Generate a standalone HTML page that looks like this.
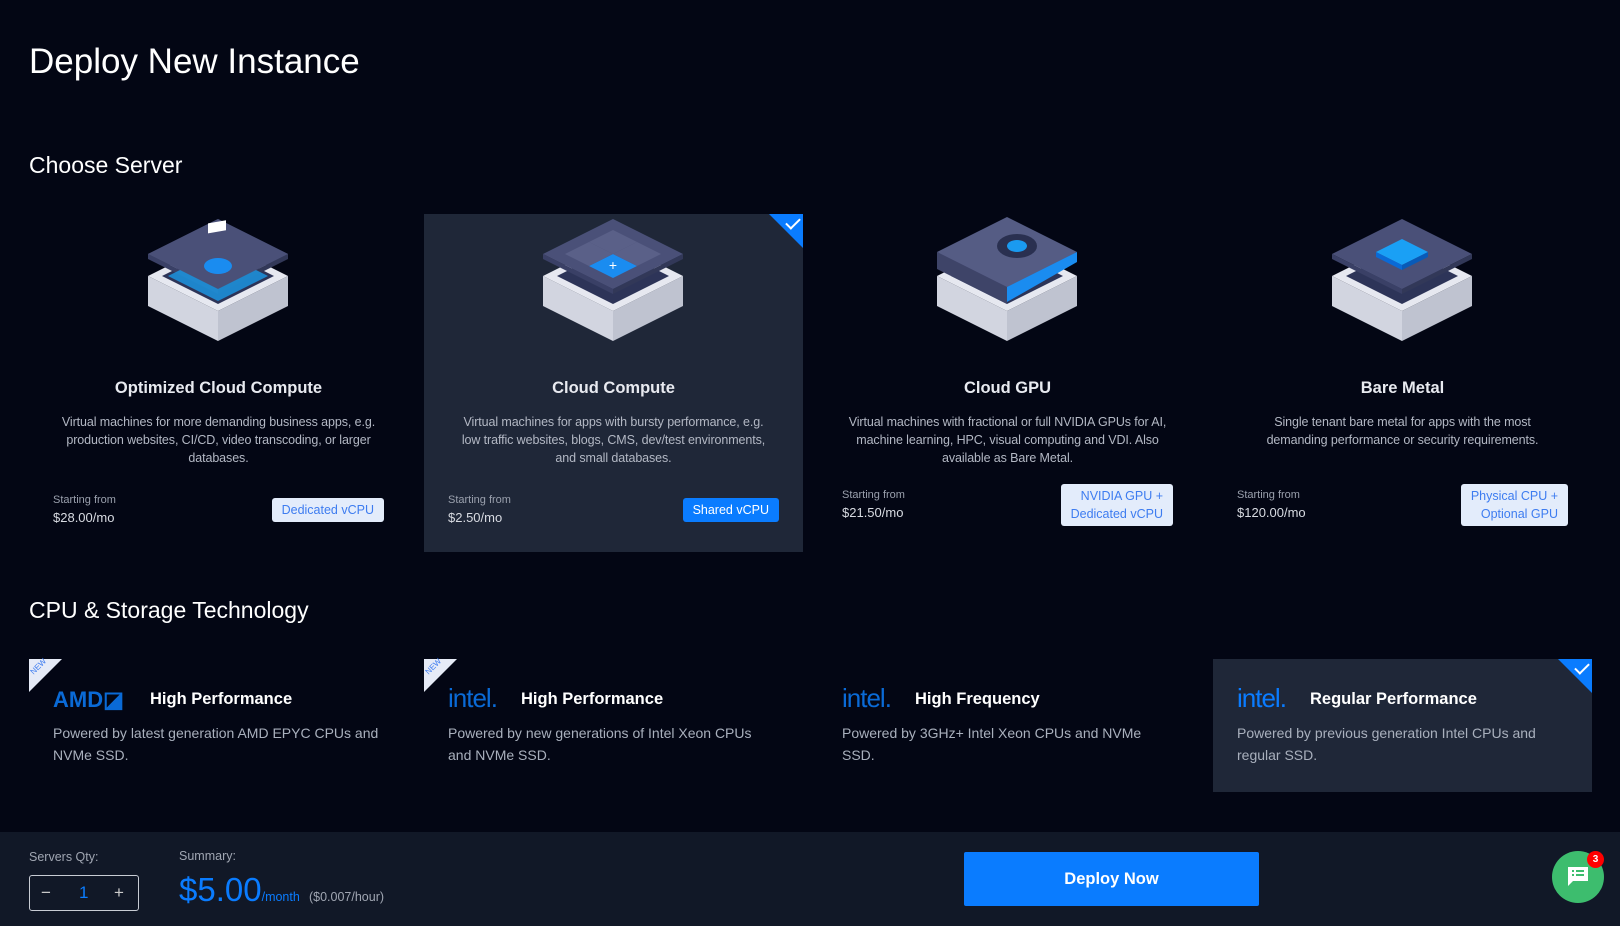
<!DOCTYPE html>
<html><head><meta charset="utf-8"><style>
*{margin:0;padding:0;box-sizing:border-box}
body{width:1620px;height:926px;background:#030614;font-family:"Liberation Sans",sans-serif;color:#fff;position:relative;overflow:hidden}
.a{position:absolute}
h1{position:absolute;left:29px;top:42px;font-size:35px;font-weight:400}
h2{position:absolute;font-size:23px;font-weight:400;left:29px}
.col{position:absolute;top:214px;width:379px;height:338px}
.col.sel{background:#1f2738}
.col .t{position:absolute;top:165px;width:100%;text-align:center;font-size:16.5px;font-weight:700;color:#e8eaf0}
.col .d{position:absolute;top:199px;left:0;right:0;text-align:center;font-size:12.5px;letter-spacing:-0.1px;line-height:18px;color:#b3b8c4;white-space:nowrap}
.col .s{position:absolute;left:24px;font-size:11px;color:#9aa0ad}
.col .p{position:absolute;left:24px;font-size:13px;color:#d8dbe2}
.btn{position:absolute;right:24px;background:#e3ecfb;color:#3d7cf0;font-size:12.5px;border-radius:3px;text-align:right;padding:3px 10px;line-height:18px}
.btn.b{background:#0a7cff;color:#fff}
.chk{position:absolute;right:0;top:0;width:0;height:0;border-top:34px solid #0a7cff;border-left:34px solid transparent}
.chk:after{content:"";position:absolute;left:-17px;top:-30px;width:12px;height:6px;border-left:2px solid #fff;border-bottom:2px solid #fff;transform:rotate(-45deg)}
.cc{position:absolute;top:659px;width:379px;height:133px}
.cc.sel{background:#1f2738}
.cc .t{position:absolute;left:121px;top:31px;font-size:16.5px;font-weight:700}
.cc .lg{position:absolute;left:24px;top:24px;font-size:26px;color:#0a6ad6;font-weight:400;letter-spacing:-1px}
.cc .d{position:absolute;left:24px;top:64px;font-size:14px;line-height:21.7px;color:#a9b0bd;white-space:nowrap}
.new{position:absolute;left:0;top:0;width:0;height:0;border-top:33px solid #e6ebf7;border-right:33px solid transparent}
.new span{position:absolute;left:0px;top:-30px;font-size:8px;color:#3d7cf0;transform:rotate(-45deg);display:block}
.foot{position:absolute;left:0;top:832px;width:1620px;height:94px;background:#111827}
</style></head><body>
<h1>Deploy New Instance</h1>
<h2 style="top:152px">Choose Server</h2>

<svg width="0" height="0" style="position:absolute"><defs>
<g id="box">
<polygon points="0,62 70,27 140,62 70,97" fill="#e6e8f0"/>
<polygon points="0,62 70,97 70,127 0,92" fill="#d2d5e0"/>
<polygon points="140,62 70,97 70,127 140,92" fill="#bfc3d0"/>
<polygon points="14,62 70,34 126,62 70,90" fill="#2d3458"/>
<polygon points="0,40 70,5 140,40 70,75" fill="#4a5078"/>
<polygon points="0,40 70,75 70,80 0,45" fill="#3a4066"/>
<polygon points="140,40 70,75 70,80 140,45" fill="#323858"/>
</g></defs></svg>

<div class="col" style="left:29px">
<svg class="a" style="left:119px;top:0" width="140" height="130"><use href="#box"/><polygon points="20,62 70,37 120,62 70,87" fill="#1a9ae8" opacity=".8"/><polygon points="0,40 70,5 140,40 70,75" fill="#4a5078"/><ellipse cx="70" cy="52" rx="14" ry="8" fill="#1a8cf0"/><rect x="60" y="20" width="18" height="10" fill="#fff" transform="skewY(-10)"/></svg>
<div class="t">Optimized Cloud Compute</div>
<div class="d">Virtual machines for more demanding business apps, e.g.<br>production websites, CI/CD, video transcoding, or larger<br>databases.</div>
<div class="s" style="top:280px">Starting from</div><div class="p" style="top:296px">$28.00/mo</div>
<div class="btn" style="top:284px">Dedicated vCPU</div>
</div>

<div class="col sel" style="left:424px">
<svg class="a" style="left:119px;top:0" width="140" height="130"><use href="#box"/><polygon points="46,52 70,40 94,52 70,64" fill="#1a8cf0"/><polygon points="22,40 46,28 70,40 46,52" fill="#5a6088"/><polygon points="70,40 94,28 118,40 94,52" fill="#5a6088"/><polygon points="46,28 70,16 94,28 70,40" fill="#5a6088"/><text x="70" y="56" fill="#fff" font-size="14" text-anchor="middle">+</text></svg>
<div class="chk"></div>
<div class="t">Cloud Compute</div>
<div class="d">Virtual machines for apps with bursty performance, e.g.<br>low traffic websites, blogs, CMS, dev/test environments,<br>and small databases.</div>
<div class="s" style="top:280px">Starting from</div><div class="p" style="top:296px">$2.50/mo</div>
<div class="btn b" style="top:284px">Shared vCPU</div>
</div>

<div class="col" style="left:818px">
<svg class="a" style="left:119px;top:0" width="140" height="130"><use href="#box"/><polygon points="0,38 70,3 140,38 70,73" fill="#555c84"/><polygon points="0,38 70,73 70,90 0,55" fill="#3e4468"/><polygon points="70,73 140,38 140,48 70,88" fill="#1a8cf0"/><ellipse cx="80" cy="32" rx="20" ry="12" fill="#2a3050"/><ellipse cx="80" cy="32" rx="10" ry="6" fill="#1a9af0"/></svg>
<div class="t">Cloud GPU</div>
<div class="d">Virtual machines with fractional or full NVIDIA GPUs for AI,<br>machine learning, HPC, visual computing and VDI. Also<br>available as Bare Metal.</div>
<div class="s" style="top:275px">Starting from</div><div class="p" style="top:291px">$21.50/mo</div>
<div class="btn" style="top:270px">NVIDIA GPU +<br>Dedicated vCPU</div>
</div>

<div class="col" style="left:1213px">
<svg class="a" style="left:119px;top:0" width="140" height="130"><use href="#box"/><polygon points="44,38 70,25 96,38 70,51" fill="#1aa0f5"/><polygon points="44,38 70,51 70,56 44,43" fill="#0a6ad6"/><polygon points="96,38 70,51 70,56 96,43" fill="#085ab8"/></svg>
<div class="t">Bare Metal</div>
<div class="d">Single tenant bare metal for apps with the most<br>demanding performance or security requirements.</div>
<div class="s" style="top:275px">Starting from</div><div class="p" style="top:291px">$120.00/mo</div>
<div class="btn" style="top:270px">Physical CPU +<br>Optional GPU</div>
</div>

<h2 style="top:597px">CPU &amp; Storage Technology</h2>

<div class="cc" style="left:29px"><div class="new"><span>NEW</span></div><div class="lg" style="font-weight:700;font-size:22px;top:28px;letter-spacing:0">AMD◪</div><div class="t" style="left:121px">High Performance</div><div class="d">Powered by latest generation AMD EPYC CPUs and<br>NVMe SSD.</div></div>
<div class="cc" style="left:424px"><div class="new"><span>NEW</span></div><div class="lg">intel.</div><div class="t" style="left:97px">High Performance</div><div class="d">Powered by new generations of Intel Xeon CPUs<br>and NVMe SSD.</div></div>
<div class="cc" style="left:818px"><div class="lg">intel.</div><div class="t" style="left:97px">High Frequency</div><div class="d">Powered by 3GHz+ Intel Xeon CPUs and NVMe<br>SSD.</div></div>
<div class="cc sel" style="left:1213px"><div class="chk"></div><div class="lg" style="color:#0a7cff">intel.</div><div class="t" style="left:97px">Regular Performance</div><div class="d">Powered by previous generation Intel CPUs and<br>regular SSD.</div></div>

<div class="foot">
<div class="a" style="left:29px;top:18px;font-size:12.5px;color:#a0a6b2">Servers Qty:</div>
<div class="a" style="left:29px;top:43px;width:110px;height:36px;border:1px solid #c8ccd4;border-radius:3px;font-size:17px;line-height:34px">
<span class="a" style="left:11px;color:#ccc">−</span><span class="a" style="left:49px;color:#0a7cff">1</span><span class="a" style="left:84px;color:#ccc">+</span></div>
<div class="a" style="left:179px;top:17px;font-size:12.5px;color:#a0a6b2">Summary:</div>
<div class="a" style="left:179px;top:39px;font-size:33px;color:#0a7cff;white-space:nowrap">$5.00<span style="font-size:12.5px">/month</span> <span style="font-size:12.5px;color:#a0a6b2">($0.007/hour)</span></div>
<div class="a" style="left:964px;top:20px;width:295px;height:54px;background:#0a7cff;border-radius:2px;text-align:center;line-height:54px;font-size:16.5px;font-weight:700">Deploy Now</div>
<div class="a" style="left:1552px;top:19px;width:52px;height:52px;border-radius:50%;background:#3dbd6e"><svg width="52" height="52"><path d="M16 16h20v14H21l-5 5z" fill="#fff"/><rect x="20" y="19" width="2" height="2" fill="#3dbd6e"/><rect x="24" y="19" width="8" height="2" fill="#3dbd6e"/><rect x="20" y="23" width="2" height="2" fill="#3dbd6e"/><rect x="24" y="23" width="8" height="2" fill="#3dbd6e"/></svg></div>
<div class="a" style="left:1587px;top:19px;width:17px;height:17px;border-radius:50%;background:#f00;font-size:10px;font-weight:700;text-align:center;line-height:17px">3</div>
</div>
</body></html>
